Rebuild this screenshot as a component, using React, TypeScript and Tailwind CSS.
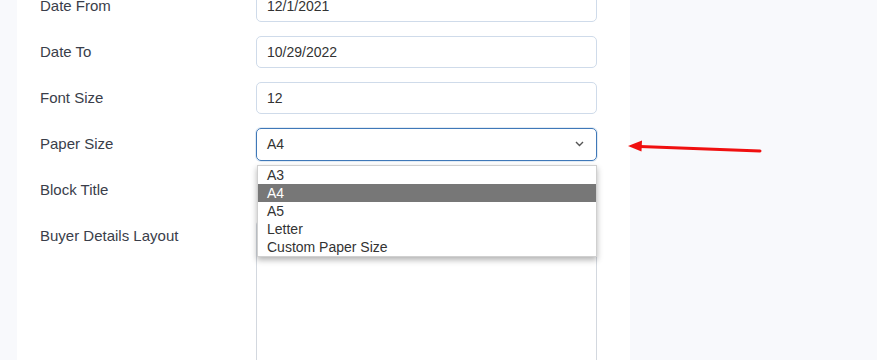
const font = { fontFamily: '"Liberation Sans", Arial, sans-serif' };

const rows = [
  { label: "Date From", value: "12/1/2021" },
  { label: "Date To", value: "10/29/2022" },
  { label: "Font Size", value: "12" },
];

const options = ["A3", "A4", "A5", "Letter", "Custom Paper Size"];

function Field({ label, children }: { label: string; children?: React.ReactNode }) {
  return (
    <div className="flex h-[32px] items-center">
      <div className="w-[216px] shrink-0 pt-[1px] text-[15px] text-[#3a3e4a]">{label}</div>
      <div className="relative w-[341px]">{children}</div>
    </div>
  );
}

export default function App() {
  return (
    <div
      className="relative flex h-[360px] w-[877px] overflow-hidden bg-[#f8f9fc] pl-[17px]"
      style={font}
    >
      <div className="w-[613px] bg-white pl-[23px]">
        <div className="-mt-[10px] flex flex-col gap-[14px]">
          {rows.map((r) => (
            <Field key={r.label} label={r.label}>
              <div className="flex h-[32px] items-center rounded-[5px] border border-[#cfdbea] px-[10px] pt-[1px] text-[14px] text-[#333]">
                {r.value}
              </div>
            </Field>
          ))}
          <Field label="Paper Size">
            <div className="flex h-[33px] items-center justify-between rounded-[5px] border border-[#3f78b8] px-[10px] text-[14px] text-[#333] shadow-[0_0_0_1px_rgba(63,120,184,0.15)]">
              <span>A4</span>
              <svg width="9" height="6" viewBox="0 0 9 6" className="mr-[2px]">
                <path d="M1 1l3.5 3.5L8 1" fill="none" stroke="#555" strokeWidth="1.4" />
              </svg>
            </div>
            <ul className="absolute left-[1px] top-[37px] z-10 w-[340px] border border-[#d0d0d0] bg-white py-0 text-[14px] leading-[18px] text-[#333] shadow-[0_3px_6px_rgba(0,0,0,0.3)]">
              {options.map((o) => (
                <li
                  key={o}
                  className={
                    o === "A4"
                      ? "h-[18px] bg-[#777] pl-[9px] text-white"
                      : "h-[18px] pl-[9px]"
                  }
                >
                  {o}
                </li>
              ))}
            </ul>
          </Field>
          <Field label="Block Title" />
          <div className="flex items-start">
            <div className="flex h-[32px] w-[216px] shrink-0 items-center pt-[1px] text-[15px] text-[#3a3e4a]">
              Buyer Details Layout
            </div>
            <div className="h-[180px] w-[341px] rounded-[5px] border border-[#d3d8df]" />
          </div>
        </div>
      </div>

      <svg
        className="absolute left-[620px] top-[136px]"
        width="150"
        height="24"
        viewBox="0 0 150 24"
      >
        <line x1="20" y1="10.5" x2="140" y2="15" stroke="#f01010" strokeWidth="3" strokeLinecap="round" />
        <path d="M8 10 L22 4.5 L21.5 15.5 Z" fill="#f01010" />
      </svg>
    </div>
  );
}
